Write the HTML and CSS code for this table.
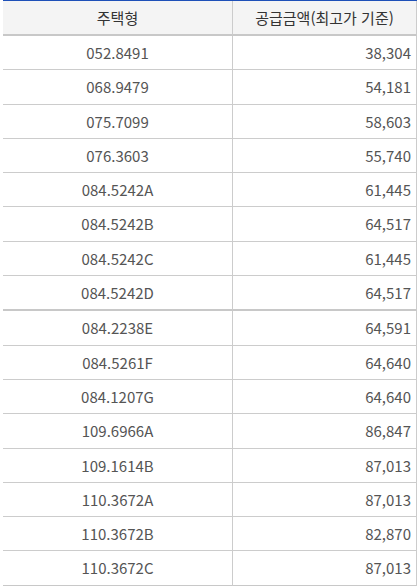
FILE: index.html
```html
<!DOCTYPE html>
<html lang="ko">
<head>
<meta charset="utf-8">
<link rel="stylesheet" href="styles.css">
</head>
<body>
<div class="wrap">
<table class="supply">
<thead>
<tr><th>주택형</th><th>공급금액(최고가 기준)</th></tr>
</thead>
<tbody>
<tr><td>052.8491</td><td>38,304</td></tr>
<tr><td>068.9479</td><td>54,181</td></tr>
<tr><td>075.7099</td><td>58,603</td></tr>
<tr><td>076.3603</td><td>55,740</td></tr>
<tr><td>084.5242A</td><td>61,445</td></tr>
<tr><td>084.5242B</td><td>64,517</td></tr>
<tr><td>084.5242C</td><td>61,445</td></tr>
<tr class="group-end"><td>084.5242D</td><td>64,517</td></tr>
<tr><td>084.2238E</td><td>64,591</td></tr>
<tr><td>084.5261F</td><td>64,640</td></tr>
<tr><td>084.1207G</td><td>64,640</td></tr>
<tr><td>109.6966A</td><td>86,847</td></tr>
<tr><td>109.1614B</td><td>87,013</td></tr>
<tr><td>110.3672A</td><td>87,013</td></tr>
<tr><td>110.3672B</td><td>82,870</td></tr>
<tr class="last"><td>110.3672C</td><td>87,013</td></tr>
</tbody>
</table>
</div>
</body>
</html>
```
FILE: styles.css
```css
html, body {
  margin: 0;
  padding: 0;
  background: #fff;
}
.wrap {
  margin-left: 3px;
  width: 414px;
}
.supply {
  width: 100%;
  border-collapse: separate;
  border-spacing: 0;
  table-layout: fixed;
  font-family: "Noto Sans CJK KR", "Noto Sans", sans-serif;
  font-size: 15px;
  color: #555;
  border-top: 1px solid #1e50b8;
}
.supply th,
.supply td {
  box-sizing: border-box;
  padding: 0 5px;
  border-right: 1px solid #cccccc;
  border-bottom: 1px solid #cccccc;
}
.supply th:first-child,
.supply td:first-child {
  width: 230px;
}
.supply th {
  background: #f4f4f4;
  color: #333;
  font-weight: normal;
  line-height: 33px;
  border-bottom: 2px solid #c8c8c8;
  text-align: center;
}
.supply td {
  line-height: 33.3px;
}
.supply td:first-child {
  text-align: center;
}
.supply td:last-child {
  text-align: right;
}
.supply tr.group-end td,
.supply tr.last td {
  border-bottom: 2px solid #c8c8c8;
}
```
